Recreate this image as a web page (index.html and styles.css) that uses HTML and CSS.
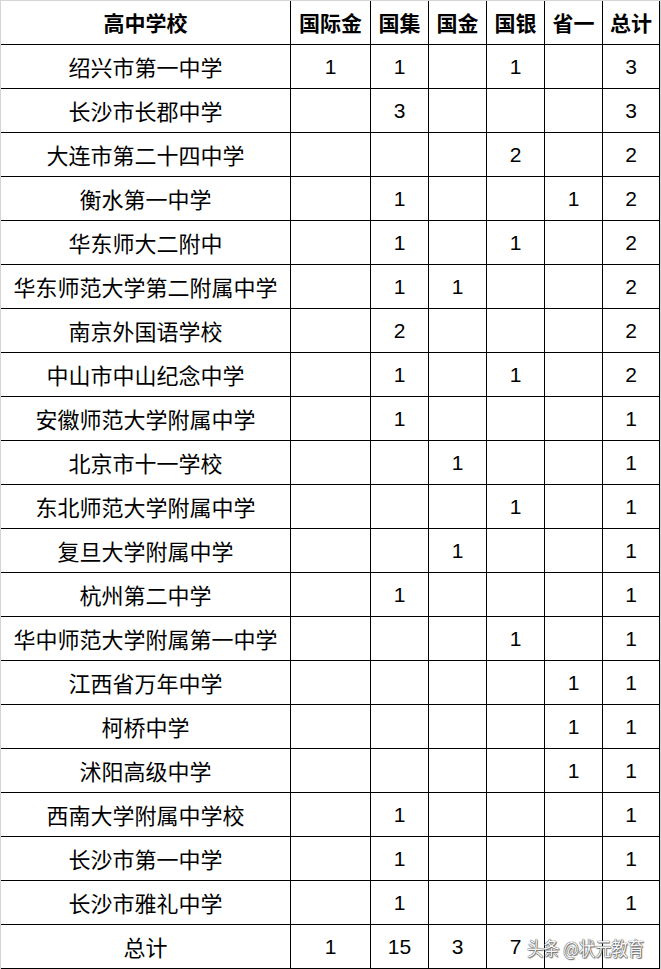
FILE: index.html
```html
<!DOCTYPE html>
<html lang="zh">
<head>
<meta charset="utf-8">
<title>高中学校</title>
<link rel="stylesheet" href="styles.css">
</head>
<body>
<div class="sheet">
<table class="grid">
<colgroup>
<col class="c-name"><col class="c-a"><col class="c-b"><col class="c-b"><col class="c-b"><col class="c-b"><col class="c-last">
</colgroup>
<thead>
<tr><th>高中学校</th><th>国际金</th><th>国集</th><th>国金</th><th>国银</th><th>省一</th><th>总计</th></tr>
</thead>
<tbody>
<tr><td class="name">绍兴市第一中学</td><td>1</td><td>1</td><td></td><td>1</td><td></td><td>3</td></tr>
<tr><td class="name">长沙市长郡中学</td><td></td><td>3</td><td></td><td></td><td></td><td>3</td></tr>
<tr><td class="name">大连市第二十四中学</td><td></td><td></td><td></td><td>2</td><td></td><td>2</td></tr>
<tr><td class="name">衡水第一中学</td><td></td><td>1</td><td></td><td></td><td>1</td><td>2</td></tr>
<tr><td class="name">华东师大二附中</td><td></td><td>1</td><td></td><td>1</td><td></td><td>2</td></tr>
<tr><td class="name">华东师范大学第二附属中学</td><td></td><td>1</td><td>1</td><td></td><td></td><td>2</td></tr>
<tr><td class="name">南京外国语学校</td><td></td><td>2</td><td></td><td></td><td></td><td>2</td></tr>
<tr><td class="name">中山市中山纪念中学</td><td></td><td>1</td><td></td><td>1</td><td></td><td>2</td></tr>
<tr><td class="name">安徽师范大学附属中学</td><td></td><td>1</td><td></td><td></td><td></td><td>1</td></tr>
<tr><td class="name">北京市十一学校</td><td></td><td></td><td>1</td><td></td><td></td><td>1</td></tr>
<tr><td class="name">东北师范大学附属中学</td><td></td><td></td><td></td><td>1</td><td></td><td>1</td></tr>
<tr><td class="name">复旦大学附属中学</td><td></td><td></td><td>1</td><td></td><td></td><td>1</td></tr>
<tr><td class="name">杭州第二中学</td><td></td><td>1</td><td></td><td></td><td></td><td>1</td></tr>
<tr><td class="name">华中师范大学附属第一中学</td><td></td><td></td><td></td><td>1</td><td></td><td>1</td></tr>
<tr><td class="name">江西省万年中学</td><td></td><td></td><td></td><td></td><td>1</td><td>1</td></tr>
<tr><td class="name">柯桥中学</td><td></td><td></td><td></td><td></td><td>1</td><td>1</td></tr>
<tr><td class="name">沭阳高级中学</td><td></td><td></td><td></td><td></td><td>1</td><td>1</td></tr>
<tr><td class="name">西南大学附属中学校</td><td></td><td>1</td><td></td><td></td><td></td><td>1</td></tr>
<tr><td class="name">长沙市第一中学</td><td></td><td>1</td><td></td><td></td><td></td><td>1</td></tr>
<tr><td class="name">长沙市雅礼中学</td><td></td><td>1</td><td></td><td></td><td></td><td>1</td></tr>
<tr><td class="name">总计</td><td>1</td><td>15</td><td>3</td><td>7</td><td></td><td></td></tr>
</tbody>
</table>
<span class="watermark">头条 @状元教育</span>
</div>
</body>
</html>
```
FILE: styles.css
```css
html, body {
  margin: 0;
  padding: 0;
  background: #ffffff;
}
.sheet {
  position: relative;
  width: 659px;
  border-left: 1px solid #d4d4d4;
  border-top: 1px solid #d4d4d4;
  border-right: 1px solid #d4d4d4;
  font-family: "Liberation Sans", "Noto Sans CJK SC", sans-serif;
  color: #000;
}
.grid {
  border-collapse: separate;
  border-spacing: 0;
  table-layout: fixed;
  width: 659px;
}
.c-name { width: 290px; }
.c-a { width: 80px; }
.c-b { width: 58px; }
.c-last { width: 57px; }
.grid th, .grid td {
  box-sizing: border-box;
  height: 44px;
  padding: 0;
  border-right: 1px solid #000;
  border-bottom: 1px solid #000;
  text-align: center;
  vertical-align: middle;
  white-space: nowrap;
  overflow: hidden;
}
.grid th {
  font-family: "Noto Sans CJK SC", sans-serif;
  font-size: 21px;
  font-weight: 700;
  line-height: 43px;
}
.grid td {
  font-size: 21px;
  line-height: 43px;
}
.grid td.name {
  font-family: "Noto Sans CJK SC", sans-serif;
  font-size: 22px;
}
.watermark {
  position: absolute;
  left: 526px;
  top: 933px;
  white-space: nowrap;
  font-family: "Noto Sans CJK SC", sans-serif;
  font-size: 19px;
  line-height: 28px;
  color: #f6f6f6;
  text-shadow: 0 0 1px #444, 0 0 1px #444, 1px 1px 1px #777;
  transform: scaleX(0.86);
  transform-origin: left center;
}
```
